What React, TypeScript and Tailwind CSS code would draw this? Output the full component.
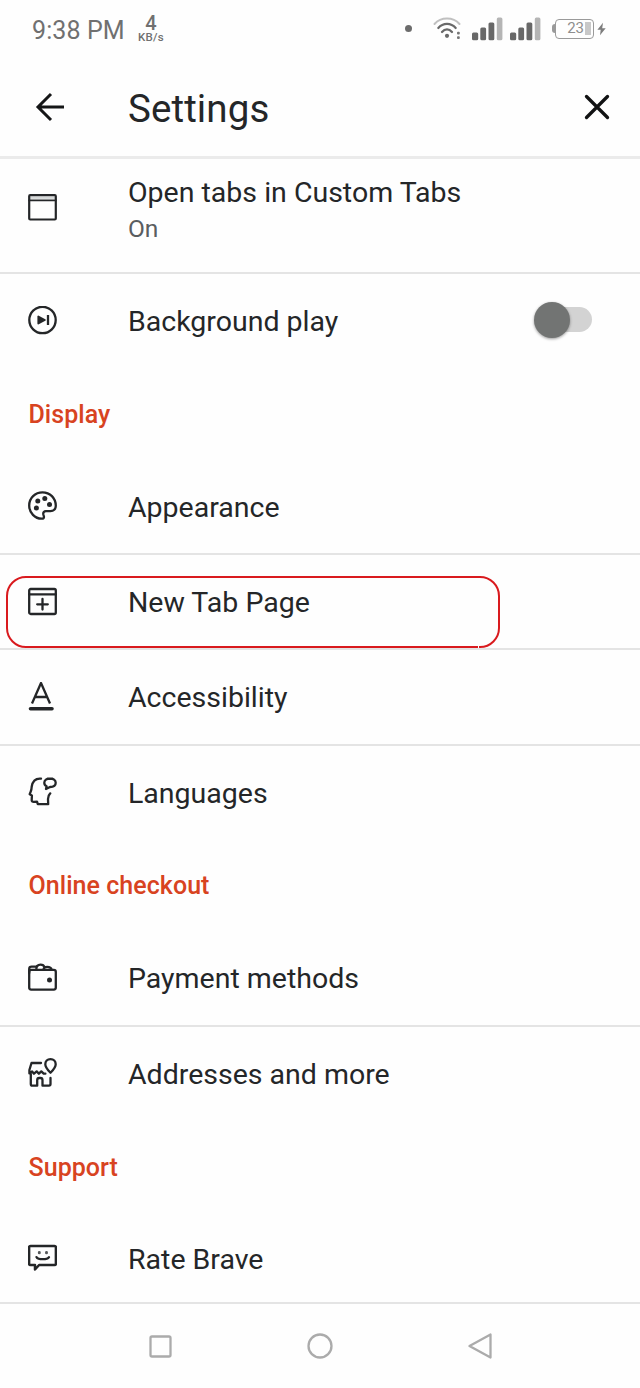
import { ReactNode } from 'react';
import clsx from 'clsx';

interface IconProps {
  children: ReactNode;
}

function RowIcon({ children }: IconProps) {
  return (
    <svg
      className="w-[29px] h-[29px] shrink-0"
      viewBox="0.5 0.5 29 29"
      fill="none"
      stroke="#242628"
      strokeWidth="2.3"
      strokeLinecap="round"
      strokeLinejoin="round"
    >
      {children}
    </svg>
  );
}

const icons = {
  tab: (
    <RowIcon>
      <path d="M2 5.2h26" stroke="#d5d8d8" strokeLinecap="butt" />
      <rect x="1.700" y="2.700" width="26.600" height="24.300" rx="1" strokeWidth="2.200" />
      <path d="M1.700 7.800h26.600" strokeWidth="1.800" />
    </RowIcon>
  ),
  play: (
    <RowIcon>
      <circle cx="15" cy="14.500" r="13.200" />
      <path d="M10.8 11v7l6.600-3.500z" fill="#242628" strokeWidth="1.800" />
      <path d="M20.500 9.500v10" strokeLinecap="butt" />
    </RowIcon>
  ),
  palette: (
    <RowIcon>
      <path d="M15 1.800C7.600 1.800 1.700 7.600 1.700 15S7.500 28.200 14.200 28.200c1.800 0 2.500-.8 2.200-2.200l-.6-2.300c-.3-1.800.8-3.100 2.600-3.100h4.600c3 0 5.300-1.900 5.300-5.300C28.300 7.600 22.400 1.800 15 1.800z" />
      <g fill="#242628" stroke="none">
        <circle cx="17.300" cy="8" r="2.500" />
        <circle cx="10.300" cy="10.500" r="2.500" />
        <circle cx="22" cy="14" r="2.500" />
        <circle cx="8.900" cy="17.500" r="2.500" />
      </g>
    </RowIcon>
  ),
  newTab: (
    <RowIcon>
      <rect x="1.700" y="2.500" width="26.600" height="25" rx="1.500" />
      <path d="M1.700 7.800h26.600M15 12.500v10.500M9.700 17.800h10.600" />
    </RowIcon>
  ),
  accessibility: (
    <RowIcon>
      <path d="M4.500 22L13.500 1.500L22.500 22M8 15.500h11" strokeLinecap="butt" />
      <path d="M3 27.300h21.500" strokeWidth="3.600" />
    </RowIcon>
  ),
  languages: (
    <RowIcon>
      <path d="M13.500 2.200C8 1.700 5 5.200 4.200 10.200c-.1 1.700-.3 3.200-.9 4.600L2.200 17.700l2.200 1.200-.2 4.800c0 1.300.9 1.700 2.200 1.600l3.100-.2.800 2.600h10.400l-.2-5.100c0-2.500.6-4.200 2.200-5.700" />
      <path d="M22.500 2c-3.300 0-5.700 1.800-5.700 4.200 0 1.700.9 2.900 2.300 3.500l-.6 2.800 4-2c3.400 0 5.700-1.700 5.700-4.300 0-2.500-2.400-4.200-5.700-4.200z" />
    </RowIcon>
  ),
  wallet: (
    <RowIcon>
      <rect x="1.700" y="7.300" width="26.600" height="19.800" rx="2" />
      <path d="M1.700 10.500V6.500c0-1.600 1-2.300 2.500-2.300h4.500M8.800 7c0-3.400 1.600-4.900 4.200-4.900 2.200 0 3.500.9 4 2.600M16 7c.2-1.900 1.500-2.700 3.700-2.700 2.500 0 4 .8 4.400 2.700" />
      <circle cx="22" cy="17.500" r="2.500" fill="#242628" stroke="none" />
    </RowIcon>
  ),
  store: (
    <RowIcon>
      <path d="M13.500 5.500H4L1.900 12.500v3.400l2.700-2 1.900 2.300 2.700-2.300 2.200 2.300 2.400-2.300 2.400 2.300h1.700" />
      <path d="M3.300 16.500v10c0 1.200.6 1.700 1.700 1.700h4.700v-5.500c0-1.500.7-2.200 2-2.200h1.300c1.400 0 2 .7 2 2.200v5.500h6.500c1 0 1.500-.6 1.500-1.600v-6.200" />
      <path d="M23 1.700c-3.200 0-5.200 2.100-5.200 5 0 3.400 2.500 5.800 5.200 8.500 2.700-2.700 5.200-5.100 5.200-8.500 0-2.900-2-5-5.200-5z" />
    </RowIcon>
  ),
  smile: (
    <RowIcon>
      <path d="M3 2.500h24c1 0 1.400.5 1.400 1.500v16c0 1-.4 1.500-1.400 1.500H11.600L7.500 26v-4.500H3c-1 0-1.400-.5-1.400-1.500V4c0-1 .4-1.500 1.400-1.500z" strokeWidth="2.500" />
      <path d="M9 13.600c1.700 2.800 10.700 2.800 12.500 0" />
      <path d="M11.800 8.900v.5M19 8.900v.5" stroke="#55585a" strokeWidth="2.900" />
    </RowIcon>
  ),
};

function SignalBars() {
  return (
    <svg className="w-[31px] h-[24px]" viewBox="0 0 31 24">
      <g fill="#686868">
        <rect x="0" y="15.500" width="6.200" height="7.700" rx="1.500" />
        <rect x="8.300" y="10.500" width="5.800" height="12.700" rx="1.500" />
        <rect x="16.500" y="5.500" width="5.800" height="17.700" rx="1.500" />
      </g>
      <rect x="24.800" y="0.500" width="5.600" height="22.700" rx="1.500" fill="#b5b5b5" />
    </svg>
  );
}

function StatusBar() {
  return (
    <div className="flex h-[60px] items-center pl-8 pr-[34px] text-[#707070]">
      <span className="mt-px w-[92px] text-[25px] tracking-[0.1px] whitespace-nowrap">9:38 PM</span>
      <div className="ml-[13px] flex w-[28px] flex-col items-center font-medium">
        <span className="-mt-[3px] h-[18px] text-[20px] leading-[18px]">4</span>
        <span className="h-[11px] text-[11.500px] leading-[11px] tracking-[0.3px]">KB/s</span>
      </div>
      <div className="ml-auto flex items-center">
        <div className="mr-[21px] mb-[3px] h-[7px] w-[7px] rounded-full bg-[#6c6c6c]" />
        <svg className="mr-[11px] mb-[2px] h-[24px] w-[28px]" viewBox="0 0 28 24" fill="none" strokeLinecap="round">
          <path d="M1.500 7C8-.2 20-.2 26.500 7" stroke="#c0c0c0" strokeWidth="2" />
          <path d="M5.300 11C10 5.500 18 5.500 22.700 11" stroke="#696969" strokeWidth="2.200" />
          <path d="M9 15c3-3.400 7-3.400 10 0" stroke="#696969" strokeWidth="2.300" />
          <circle cx="14" cy="18.800" r="2.100" fill="#696969" />
          <rect x="24" y="14.700" width="2.800" height="2.800" rx="1" fill="#777" />
          <rect x="24" y="19.300" width="2.800" height="2.800" rx="1" fill="#777" />
        </svg>
        <div className="mb-[2px] flex gap-[7px]">
          <SignalBars />
          <SignalBars />
        </div>
        <div className="ml-[11px] mb-[3px] flex items-center">
          <div className="h-[9px] w-[3px] rounded-l-sm bg-[#999]" />
          <div className="flex h-[20px] w-[39px] items-center justify-end rounded-[4px] border-[1.500px] border-[#9a9a9a] pr-[2px]">
            <span className="text-[15px] leading-none text-[#8e8e8e]">23</span>
            <div className="ml-[1px] h-[13px] w-[6px] bg-[#c8c8c8]" />
          </div>
        </div>
        <svg className="ml-[3px] mb-[3px] h-[14px] w-[9px]" viewBox="0 0 9 14" fill="#7d7d7d">
          <path d="M6 .8L.4 7.700h3.300L3 13.200l5.700-7H5.200z" />
        </svg>
      </div>
    </div>
  );
}

function Header() {
  return (
    <header className="flex h-[99px] items-center border-b-[3px] border-[#ebebeb] pl-[34px] pr-[29px]">
      <svg className="mb-[2px] h-[32px] w-[32px]" viewBox="0 0 32 32" fill="none" stroke="#151617" strokeWidth="3">
        <path d="M30 16H4M17 3L4 16l13 13" />
      </svg>
      <h1 className="ml-[62px] mt-[2px] text-[38.500px] leading-none tracking-[0.1px] text-[#242628]">Settings</h1>
      <svg className="ml-auto mb-[2px] h-[28px] w-[28px]" viewBox="0 0 28 28" stroke="#111213" strokeWidth="3.300" strokeLinecap="round">
        <path d="M3.500 3.500l21 21M24.500 3.500l-21 21" />
      </svg>
    </header>
  );
}

interface RowProps {
  icon: ReactNode;
  label: string;
  divider?: boolean;
  children?: ReactNode;
}

function Row({ icon, label, divider, children }: RowProps) {
  return (
    <div className={clsx('flex h-[95.300px] items-center pl-[28px]', divider && 'border-b-2 border-[#e4e4e4]')}>
      <div className={divider ? 'mb-[1px]' : 'mb-[3px]'}>{icon}</div>
      <span className={clsx('ml-[71px] text-[28.500px] leading-none', divider ? 'mt-[3px]' : 'mt-[1px]')}>{label}</span>
      {children}
    </div>
  );
}

function SectionTitle({ children }: { children: ReactNode }) {
  return (
    <h2 className="flex h-[90.500px] items-center pl-[28.500px] text-[25px] font-medium tracking-[0.05px] text-[#d84321]">
      {children}
    </h2>
  );
}

function Toggle() {
  return (
    <div className="relative mb-[5px] ml-auto mr-[48px] h-[25px] w-[57px] rounded-full bg-[#d3d3d3]">
      <div className="absolute -top-[5px] -left-[1px] h-[36px] w-[36px] rounded-full bg-[#727473] shadow-[0_1px_3px_rgba(0,0,0,0.4)]" />
    </div>
  );
}

export default function App() {
  return (
    <div className="relative flex h-[1388px] w-[640px] flex-col overflow-hidden bg-[#fefefe] font-[Roboto,sans-serif] text-[#242628]">
      <StatusBar />
      <Header />

      <main>
        <div className="flex h-[115px] border-b-2 border-[#e4e4e4] pl-[28px]">
          <div className="mt-[34px]">{icons.tab}</div>
          <div className="ml-[71px] mt-[16px]">
            <p className="text-[28.500px] leading-[36px]">Open tabs in Custom Tabs</p>
            <p className="text-[24.500px] leading-[36px] text-[#5a5d60]">On</p>
          </div>
        </div>
        <Row icon={icons.play} label="Background play">
          <Toggle />
        </Row>

        <SectionTitle>Display</SectionTitle>
        <Row icon={icons.palette} label="Appearance" divider />
        <Row icon={icons.newTab} label="New Tab Page" divider />
        <Row icon={icons.accessibility} label="Accessibility" divider />
        <Row icon={icons.languages} label="Languages" />

        <SectionTitle>Online checkout</SectionTitle>
        <Row icon={icons.wallet} label="Payment methods" divider />
        <Row icon={icons.store} label="Addresses and more" />

        <SectionTitle>Support</SectionTitle>
        <Row icon={icons.smile} label="Rate Brave" />
      </main>

      {/* Highlight around the New Tab Page row */}
      <div className="absolute left-[6px] top-[576px] h-[72px] w-[494px] rounded-[20px] border-2 border-[#d91a1e]">
        <div className="absolute -bottom-[2px] right-[19px] h-[2px] w-px bg-[#fefefe]" />
      </div>

      <nav className="absolute inset-x-0 bottom-0 flex h-[86px] items-center justify-center gap-[132px] border-t-2 border-[#e4e4e4] bg-[#fefefe] pb-[1px]">
        <svg className="h-[28px] w-[28px]" viewBox="0 0 28 28" fill="none" stroke="#ababab" strokeWidth="2.300">
          <rect x="4.500" y="4.500" width="20" height="20" rx="1.500" />
        </svg>
        <svg className="h-[28px] w-[28px]" viewBox="0 0 28 28" fill="none" stroke="#ababab" strokeWidth="2.300">
          <circle cx="14" cy="14" r="11.500" />
        </svg>
        <svg className="h-[28px] w-[28px]" viewBox="0 0 28 28" fill="none" stroke="#ababab" strokeWidth="2.300" strokeLinejoin="round">
          <path d="M24.500 2.500v23L3.500 14z" />
        </svg>
      </nav>
    </div>
  );
}
